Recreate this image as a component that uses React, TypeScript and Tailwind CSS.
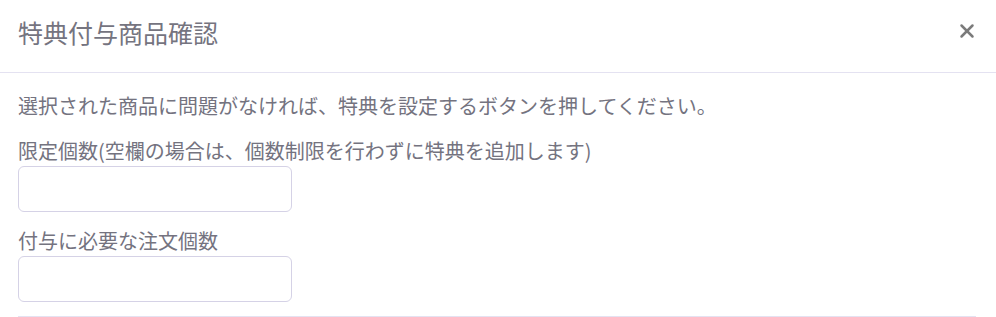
import { X } from 'lucide-react';

const FONT = '[font-family:"Noto_Sans_CJK_JP","Noto_Sans",sans-serif]';

function Field({ label }: { label: string }) {
  return (
    <div className="mb-[14px]">
      <label className="block text-[20px] leading-[30px] text-[#74737f]">{label}</label>
      <input
        type="text"
        className="block h-[46px] w-[274px] rounded-[6px] border border-[#d5d2e6] bg-white px-3 outline-none"
      />
    </div>
  );
}

export default function App() {
  return (
    <div className={`w-[996px] bg-white ${FONT}`}>
      {/* Header */}
      <div className="flex h-[73px] items-start justify-between border-b border-[#e4e2f1] pl-[18px] pr-[18px] pt-[17px]">
        <h5 className="text-[25px] leading-[30px] text-[#75747f]">特典付与商品確認</h5>
        <button className="mt-[3px] text-[#7b7b7b]">
          <X size={22} strokeWidth={2.7} />
        </button>
      </div>

      {/* Body */}
      <div className="pl-[18px] pr-[20px] pt-[18px]">
        <p className="mb-[15px] text-[20px] leading-[30px] text-[#74737f]">
          選択された商品に問題がなければ、特典を設定するボタンを押してください。
        </p>
        <Field label="限定個数(空欄の場合は、個数制限を行わずに特典を追加します)" />
        <Field label="付与に必要な注文個数" />
        <div className="border-t border-[#e4e2f1]" />
      </div>
    </div>
  );
}
